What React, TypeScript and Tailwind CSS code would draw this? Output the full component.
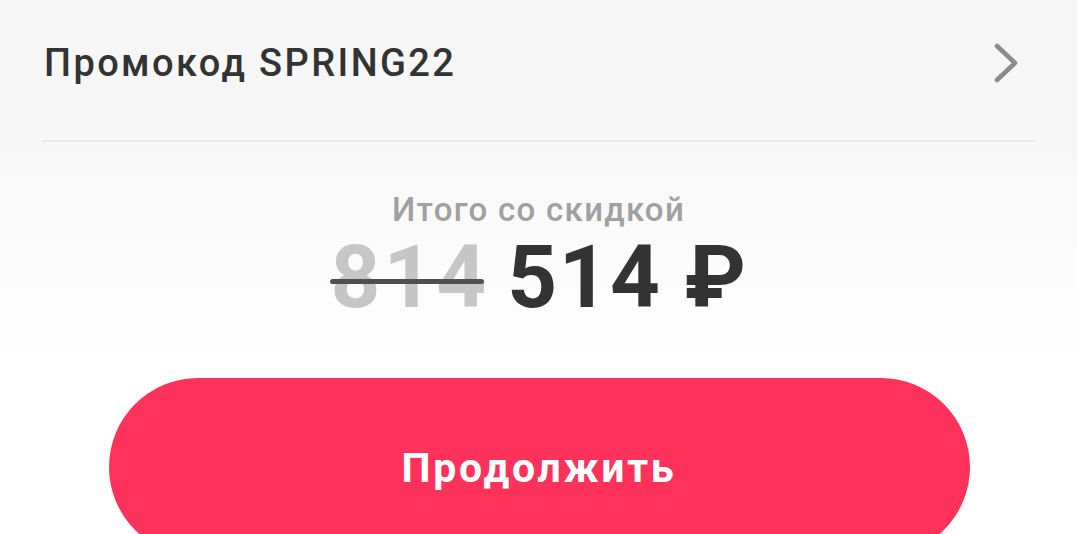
import React from "react";

export default function App() {
  return (
    <div
      className="w-[1077px] h-[534px] overflow-hidden bg-gradient-to-b from-[#f6f6f6] from-[20%] to-[#ffffff] to-[70%]"
      style={{ fontFamily: "Roboto, 'Noto Sans', sans-serif" }}
    >
      <div className="mx-[42px] h-[142px] border-b-2 border-[#e8e8e8] flex items-center justify-between pb-[14px]">
        <span className="ml-[2px] text-[38px] tracking-[2.4px] leading-none text-[#333333] font-medium">Промокод SPRING22</span>
        <svg width="28" height="42" viewBox="0 0 28 42" className="mr-[14px]">
          <path d="M4 4 L22 21 L4 38" fill="none" stroke="#8c8c8c" strokeWidth="4.5" strokeLinecap="round" strokeLinejoin="round" />
        </svg>
      </div>
      <div className="flex flex-col items-center pt-[51px]">
        <span className="text-[33px] tracking-[1.3px] leading-none font-medium text-[#a0a0a0]">Итого со скидкой</span>
        <div className="flex items-baseline gap-[18px] mt-[8px] ml-[1px]">
          <span className="relative text-[87px] tracking-[3px] leading-none font-bold text-[#c6c6c6]">
            814
            <span className="absolute left-[0px] right-[5px] top-[52%] h-[4.5px] rounded-full bg-[#505050]"></span>
          </span>
          <span className="text-[87px] tracking-[1.5px] leading-none font-bold text-[#333333]">514 ₽</span>
        </div>
      </div>
      <div className="flex justify-center mt-[57px]">
        <button className="w-[861px] h-[178px] rounded-full bg-[#fe325b] text-white text-[41px] tracking-[2.7px] font-bold flex items-start justify-center pt-[60px] ml-[1px]">
          Продолжить
        </button>
      </div>
    </div>
  );
}
